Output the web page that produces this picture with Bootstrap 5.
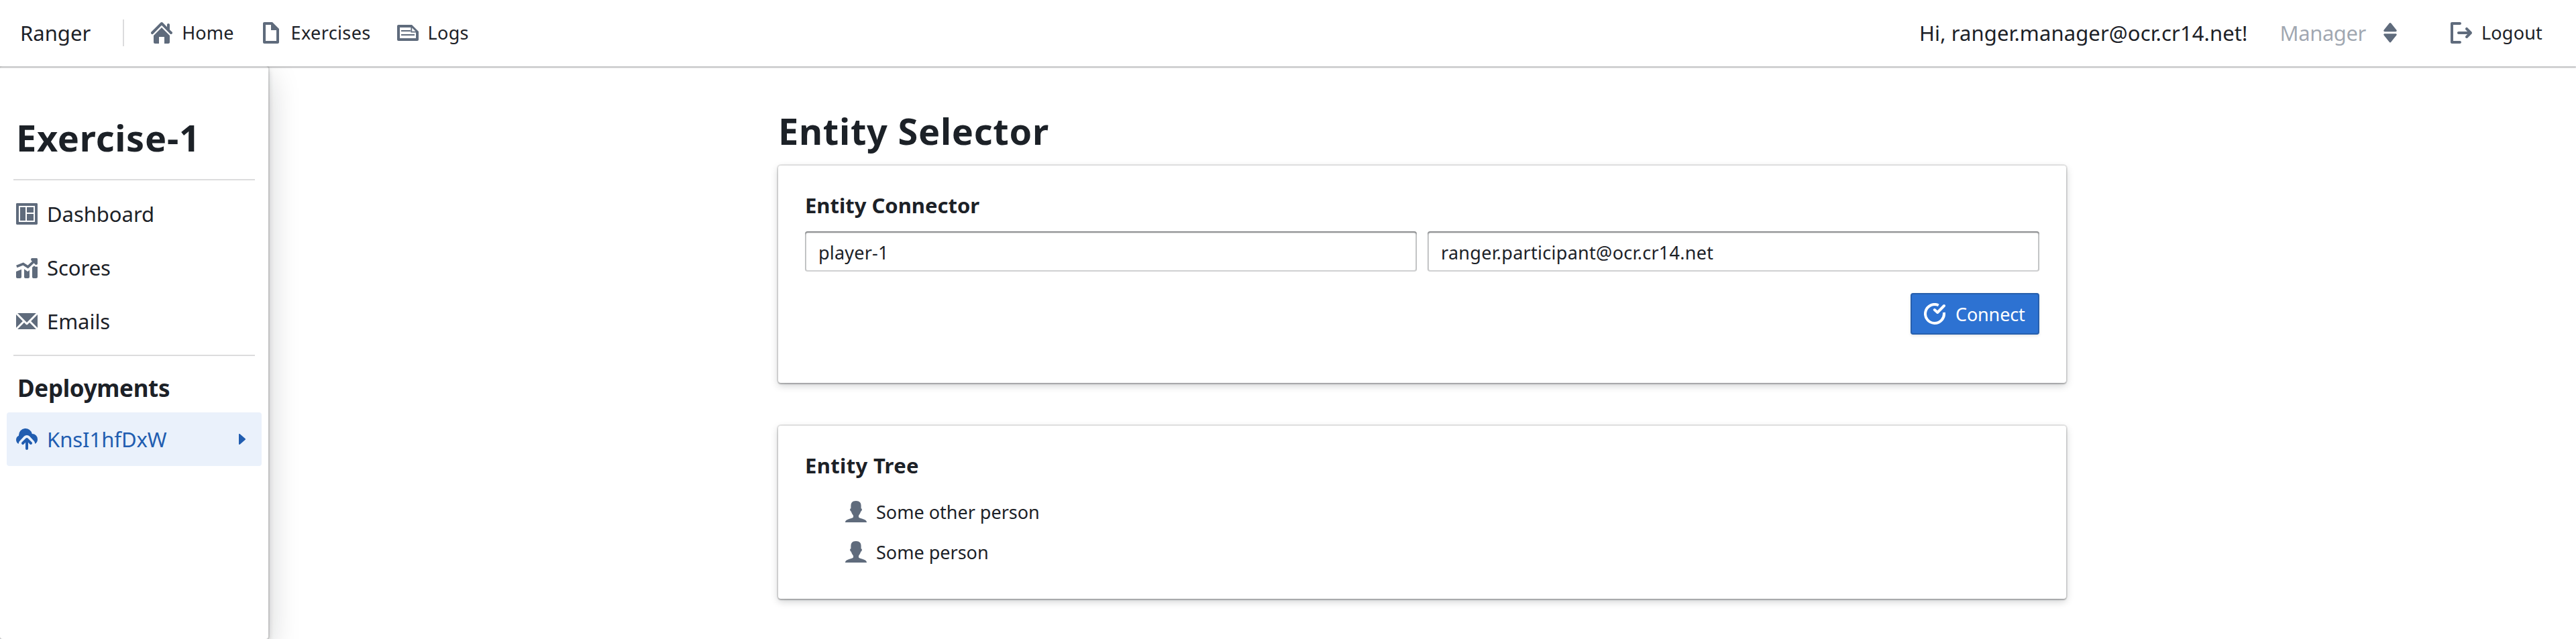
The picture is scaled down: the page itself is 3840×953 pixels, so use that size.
<!DOCTYPE html>
<html lang="en">
<head>
<meta charset="utf-8">
<meta name="viewport" content="width=device-width, initial-scale=1">
<title>Ranger</title>
<link href="https://cdn.jsdelivr.net/npm/bootstrap@5.3.0/dist/css/bootstrap.min.css" rel="stylesheet">
<style>
  :root { --ink: #1c2127; --muted: #5f6b7c; --line: rgba(17,20,24,.15); }
  body { font-family: "Noto Sans", sans-serif; font-size: 27px; line-height: 36px; color: var(--ink); background: #fff; height: 953px; overflow: hidden; }
  svg { width: 32px; height: 32px; fill: currentColor; color: var(--muted); flex: none; display: block; }
  a, a:hover { color: inherit; text-decoration: none; }
  .fs-l { font-size: 31px; }
  .topbar { height: 99px; padding: 0 50px 1px 30px; z-index: 2; box-shadow: 0 0 0 2px rgba(17,20,24,.1), 0 2px 2px rgba(17,20,24,.2); flex-wrap: nowrap; }
  .rule-v { width: 2px; height: 40px; background: var(--line); margin: 0 40px 0 48px; }
  .nav-item-link { display: flex; align-items: center; gap: 14px; }
  .role { color: rgba(95,107,124,.6); letter-spacing: -.43px; margin-left: 48px; gap: 20px; }
  .sidebar { width: 400px; z-index: 1; padding: 74px 10px 0; border-radius: 4px; box-shadow: 0 0 0 2px rgba(17,20,24,.1), 0 4px 8px rgba(17,20,24,.2), 0 16px 48px rgba(17,20,24,.2); }
  .page-title { font-size: 54px; line-height: 64px; font-weight: 700; margin: 0; letter-spacing: .74px; }
  .rule-h { height: 2px; background: var(--line); margin: 0 10px 10px; }
  .side-item { height: 80px; padding: 0 14px; gap: 14px; border-radius: 4px; font-size: 31px; letter-spacing: -.05px; }
  .side-item.current, .side-item.current svg { color: #215db0; }
  .side-item.current { background: #eaf1fb; }
  .side-head { font-size: 35px; line-height: 44px; font-weight: 700; letter-spacing: -.32px; margin: 26px 0 14px 16px; }
  main { padding-top: 64px; }
  .column { width: 1920px; }
  .panel { --bs-card-border-width: 0; --bs-card-border-radius: 4px; color: inherit; padding: 40px; box-shadow: 0 0 0 2px rgba(17,20,24,.1), 0 2px 2px rgba(17,20,24,.2), 0 4px 12px rgba(17,20,24,.2); }
  .panel h2 { font-size: 31px; line-height: 38px; font-weight: 700; margin: 0 0 20px; }
  .field, .field:focus { height: 60px; padding: 2px 19px 0 20px; border: 0; border-radius: 4px; font-size: 27px; line-height: 58px; color: var(--ink); box-shadow: inset 0 0 0 2px rgba(17,20,24,.2), inset 0 2px 2px rgba(17,20,24,.4); }
  .connect { --bs-btn-bg: #2d72d2; --bs-btn-hover-bg: #215db0; width: 192px; height: 62px; border: 0; border-radius: 4px; padding: 0 20px; font-size: 27px; gap: 15px; letter-spacing: -.16px; white-space: nowrap; box-shadow: inset 0 0 0 2px rgba(17,20,24,.2), 0 2px 4px rgba(17,20,24,.1); }
  .connect svg { color: #fff; }
  .connect span, .tree-node span { padding-top: 2px; }
  .tree-node { height: 60px; padding-left: 60px; gap: 14px; }
</style>
</head>
<body class="d-flex flex-column">
<nav class="topbar navbar bg-white position-relative d-flex align-items-center flex-shrink-0">
  <a class="fs-l" href="#">Ranger</a>
  <div class="rule-v"></div>
  <div class="d-flex" style="gap:39px">
    <a class="nav-item-link" href="#"><svg viewBox="0 0 16 16"><path d="M2 10v5c0 .55.45 1 1 1h3v-5h4v5h3c.55 0 1-.45 1-1v-5L8 4l-6 6zm13.71-2.71L14 5.59V2c0-.55-.45-1-1-1s-1 .45-1 1v1.59L8.71.29C8.53.11 8.28 0 8 0s-.53.11-.71.29l-7 7a1.003 1.003 0 001.42 1.42L8 2.41l6.29 6.29c.18.19.43.3.71.3a1.003 1.003 0 00.71-1.71z"/></svg><span style="letter-spacing:.14px">Home</span></a>
    <a class="nav-item-link" href="#"><svg viewBox="0 0 16 16"><path d="M9 0H3c-.55 0-1 .45-1 1v14c0 .55.45 1 1 1h10c.55 0 1-.45 1-1V5L9 0zm3 14H4V2h4v4h4v8z"/></svg><span style="letter-spacing:.38px">Exercises</span></a>
    <a class="nav-item-link" href="#"><svg viewBox="0 0 16 16"><path fill-rule="evenodd" d="M11 2H1c-.55 0-1 .45-1 1v10c0 .55.45 1 1 1h14c.55 0 1-.45 1-1V7l-5-5zM2 4h8.2v3.8H14V12H2V4zm9.1.2l2.7 2.7h-2.7V4.2z"/><path d="M3 6h7v1H3zM3 9h10v1H3z"/></svg><span style="letter-spacing:.3px">Logs</span></a>
  </div>
  <span class="fs-l ms-auto" style="letter-spacing:.1px">Hi, ranger.manager@ocr.cr14.net!</span>
  <div class="role fs-l d-flex align-items-center">Manager<svg viewBox="0 0 16 16"><path d="M4 7.1h8c.8 0 1.1-.6.7-1.200L8.600.8c-.3-.4-.9-.4-1.200 0L3.300 5.900c-.4.6-.1 1.200.7 1.200zM12 8.600H4c-.8 0-1.100.6-.7 1.200l4.100 5.100c.3.400.9.400 1.200 0l4.100-5.100c.4-.6.1-1.200-.7-1.200z"/></svg></div>
  <a class="nav-item-link" href="#" style="margin-left:74px"><svg viewBox="0 0 16 16"><path d="M7 14H2V2h5c.55 0 1-.45 1-1s-.45-1-1-1H1C.45 0 0 .45 0 1v14c0 .55.45 1 1 1h6c.55 0 1-.45 1-1s-.45-1-1-1zm8.710-6.710l-3-3a1.003 1.003 0 00-1.420 1.420L12.590 7H6c-.55 0-1 .45-1 1s.45 1 1 1h6.590l-1.290 1.290c-.19.18-.3.43-.3.710a1.003 1.003 0 001.710.710l3-3c.18-.18.29-.43.29-.710 0-.28-.11-.53-.29-.710z"/></svg><span style="letter-spacing:.2px">Logout</span></a>
</nav>

<div class="d-flex flex-grow-1">
  <aside class="sidebar bg-white position-relative flex-shrink-0">
    <h1 class="page-title" style="margin:0 0 30px 14px">Exercise-1</h1>
    <div class="rule-h"></div>
    <a class="side-item d-flex align-items-center" href="#"><svg viewBox="0 0 16 16"><path fill-rule="evenodd" d="M.7 0h14.600c.4 0 .7.3.7.700v14.600c0 .4-.3.700-.7.700H.7c-.4 0-.7-.3-.7-.700V.700C0 .300.300 0 .700 0zM2 2v12h12V2H2z"/><path d="M3 3h4v10H3zM8 3h5v4H8zM8 8h5v5H8z"/></svg>Dashboard</a>
    <a class="side-item d-flex align-items-center" href="#"><svg viewBox="0 0 16 16"><path d="M0 11l4-1.600V15c0 .6-.4 1-1 1H1c-.6 0-1-.4-1-1zM6 9.100l2.700 1.900L10 9.900V15c0 .6-.4 1-1 1H7c-.6 0-1-.4-1-1zM12 7.900l1.500-1.300.8.800H16V15c0 .6-.4 1-1 1h-2c-.6 0-1-.4-1-1z"/><path d="M.4 7.300L5.300 5.300l3.500 2.300 5.400-5" fill="none" stroke="currentColor" stroke-width="1.900"/><path d="M12 1h3.200c.5 0 .8.300.8.800V5c0 .9-1.100 1.300-1.700.7l-3-3C10.700 2.100 11.100 1 12 1z"/></svg>Scores</a>
    <a class="side-item d-flex align-items-center" href="#"><svg viewBox="0 0 16 16"><path d="M0 3.060v9.880L4.940 8 0 3.060zM14.940 2H1.060L8 8.940 14.940 2zm-6.410 8.530c-.14.14-.32.22-.53.22s-.39-.08-.53-.22L6 9.060 1.060 14h13.880L10 9.060l-1.470 1.470zM11.060 8L16 12.940V3.060L11.060 8z"/></svg>Emails</a>
    <div class="rule-h" style="margin-top:10px"></div>
    <h2 class="side-head">Deployments</h2>
    <a class="side-item current d-flex align-items-center" href="#"><svg viewBox="0 0 16 16"><path d="M8.710 7.290C8.530 7.110 8.280 7 8 7s-.53.110-.71.290l-3 3a1.003 1.003 0 001.420 1.420L7 10.410V15c0 .55.45 1 1 1s1-.45 1-1v-4.590l1.290 1.290c.18.190.43.300.71.300a1.003 1.003 0 00.710-1.710l-3-3z"/><path d="M12 4c-.03 0-.07 0-.1.010A5 5 0 002 5c0 .110.010.220.020.330A3.510 3.510 0 000 8.500c0 1.300.7 2.400 1.800 3 .1-.9.400-1.700 1.100-2.400l3-3.200a2.900 2.900 0 014.200 0l3 3.200c.7.700 1 1.500 1 2.400A4 4 0 0016 8a4 4 0 00-4-4z"/></svg>KnsI1hfDxW<svg class="ms-auto" viewBox="0 0 16 16"><path d="M11 8c0-.15-.07-.28-.17-.37l-4-3.500A.495.495 0 006 4.500v7a.495.495 0 00.83.370l4-3.500c.1-.09.17-.22.17-.37z"/></svg></a>
  </aside>

  <main class="flex-grow-1">
    <div class="column mx-auto">
      <h1 class="page-title" style="margin-bottom:20px">Entity Selector</h1>
      <section class="panel card" style="height:324px;margin-bottom:64px">
        <h2>Entity Connector</h2>
        <div class="d-flex gap-3">
          <input class="field form-control" type="text" value="player-1" style="letter-spacing:.2px">
          <input class="field form-control" type="text" value="ranger.participant@ocr.cr14.net" style="letter-spacing:.28px">
        </div>
        <div class="d-flex justify-content-end" style="margin-top:32px">
          <button type="button" class="connect btn btn-primary d-flex align-items-center"><svg viewBox="0 0 16 16"><path d="M10.900 1.620A7 7 0 1014.930 7" fill="none" stroke="currentColor" stroke-width="2"/><path d="M7.900 5L10.100 7l4.900-5" fill="none" stroke="currentColor" stroke-width="2" stroke-linecap="round" stroke-linejoin="round"/></svg><span>Connect</span></button>
        </div>
      </section>
      <section class="panel card">
        <h2 style="letter-spacing:.35px">Entity Tree</h2>
        <div class="tree-node d-flex align-items-center"><svg viewBox="0 0 16 16"><path id="person" d="M8 0C5.300 0 4.200 1.500 4.200 3.600v2c-.5.100-.8.500-.6 1.200.1.600.4 1 .8 1.100.3 1.100.8 2 1.400 2.700.3.400.3 1.200.1 1.600-.4.600-1.600.8-2.700 1.200C1.300 14 0 14.600 0 16h16c0-1.400-1.300-2-3.200-2.600-1.100-.4-2.300-.6-2.700-1.200-.2-.4-.2-1.200.1-1.600.6-.7 1.100-1.600 1.400-2.700.4-.1.700-.5.8-1.100.2-.7-.1-1.100-.6-1.200v-2C11.800 1.500 10.700 0 8 0z"/></svg><span>Some other person</span></div>
        <div class="tree-node d-flex align-items-center"><svg viewBox="0 0 16 16"><use href="#person"/></svg><span>Some person</span></div>
      </section>
    </div>
  </main>
</div>
<script src="https://cdn.jsdelivr.net/npm/bootstrap@5.3.0/dist/js/bootstrap.bundle.min.js"></script>
</body>
</html>
